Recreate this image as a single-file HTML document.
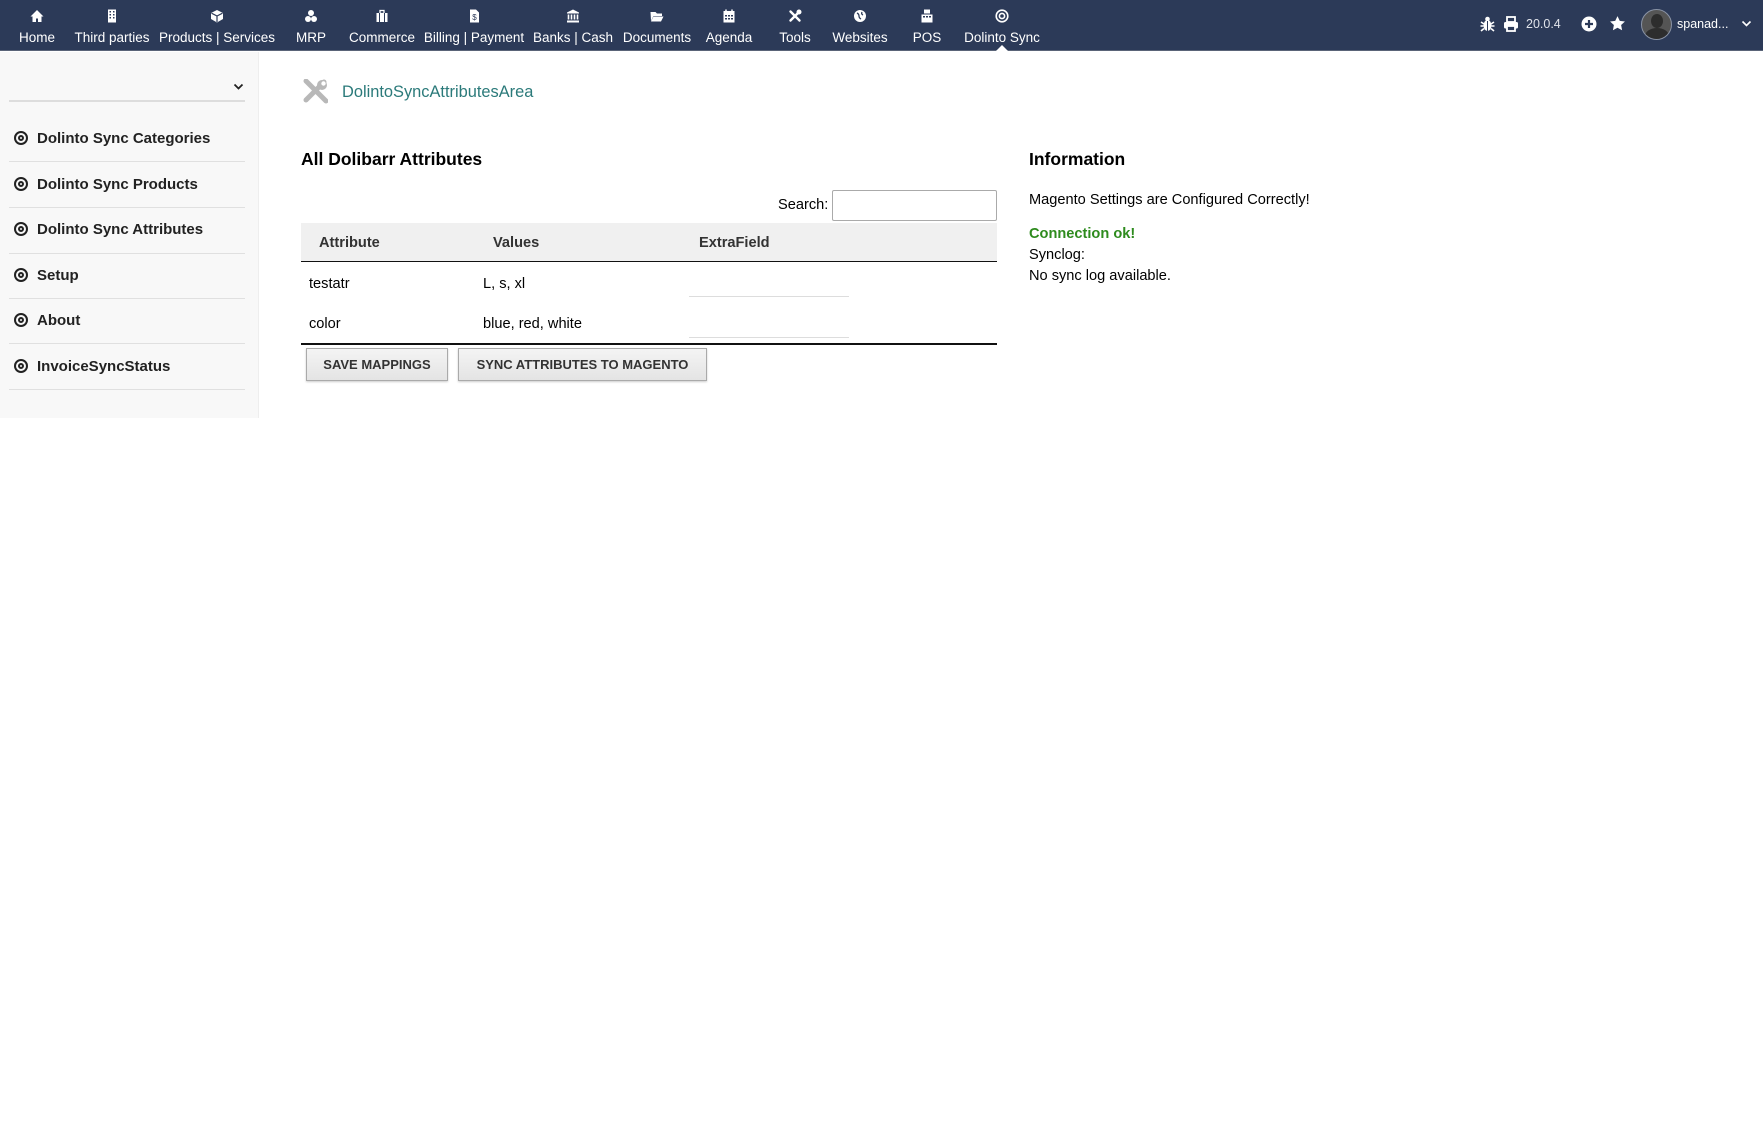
<!DOCTYPE html>
<html><head><meta charset="utf-8">
<style>
*{margin:0;padding:0;box-sizing:border-box}
body{width:1763px;height:1124px;background:#fff;font-family:"Liberation Sans",Arial,sans-serif;color:#000;position:relative;overflow:hidden}
#nav{position:absolute;left:0;top:0;width:1763px;height:51px;background:#2c3a58;border-bottom:1px solid #5a6478}
.ni{position:absolute;top:0;height:50px;text-align:center;color:#fff;font-size:13.5px;transform:translateX(-50%);white-space:nowrap}
.ni .ic{position:absolute;left:50%;top:9px;transform:translateX(-50%);width:14px;height:14px}
.ni .lb{position:absolute;top:30px;left:50%;transform:translateX(-50%)}
.ab{position:absolute}
#side{position:absolute;left:0;top:52px;width:259px;height:366px;background:#f8f8f8;border-right:1px solid #eee}
.mi{position:absolute;left:14px;font-size:15px;font-weight:bold;color:#222}
.sep{position:absolute;left:9px;width:236px;height:1px;background:#e0e0e0}
.tgt{display:inline-block;width:14px;height:14px;border:2px solid #222;border-radius:50%;position:relative;vertical-align:-2px;margin-right:9px}
.tgt:after{content:"";position:absolute;left:2px;top:2px;width:6px;height:6px;border:2px solid #222;border-radius:50%;box-sizing:border-box}
.t{position:absolute;font-size:14.6px;line-height:18px}
.btn{position:absolute;top:348px;height:33px;border:1px solid #aaa;background:linear-gradient(#f4f4f4,#e4e4e4);font-size:13px;font-weight:bold;color:#333;text-align:center;line-height:31px;box-shadow:0 1px 2px rgba(0,0,0,.2)}
</style></head><body>
<div id="nav">
<div class="ni" style="left:37px"><svg class="ic" viewBox="0 0 14 14"><path d="M7 1L0.5 7.5h2V13h3.5V9.5h2V13H11.5V7.5h2z" fill="#fff"/></svg><span class="lb">Home</span></div>
<div class="ni" style="left:112px"><svg class="ic" viewBox="0 0 14 14"><rect x="3" y="0.5" width="8" height="13" fill="#fff"/><g fill="#2c3a58"><rect x="4.5" y="2" width="1.5" height="1.5"/><rect x="8" y="2" width="1.5" height="1.5"/><rect x="4.5" y="5" width="1.5" height="1.5"/><rect x="8" y="5" width="1.5" height="1.5"/><rect x="4.5" y="8" width="1.5" height="1.5"/><rect x="8" y="8" width="1.5" height="1.5"/></g></svg><span class="lb">Third parties</span></div>
<div class="ni" style="left:217px"><svg class="ic" viewBox="0 0 14 14"><path d="M7 1L13 4v6l-6 3.5L1 10V4z" fill="#fff"/><path d="M1.5 4.2L7 7l5.5-2.8M7 7v6" stroke="#2c3a58" stroke-width="1.2" fill="none"/></svg><span class="lb">Products | Services</span></div>
<div class="ni" style="left:311px"><svg class="ic" viewBox="0 0 14 14"><circle cx="7" cy="4" r="3" fill="#fff"/><circle cx="4" cy="10" r="3" fill="#fff"/><circle cx="10" cy="10" r="3" fill="#fff"/></svg><span class="lb">MRP</span></div>
<div class="ni" style="left:382px"><svg class="ic" viewBox="0 0 14 14"><rect x="1.5" y="4" width="11" height="9" fill="#fff"/><rect x="5" y="1.5" width="4" height="3" fill="none" stroke="#fff" stroke-width="1.3"/><path d="M4.5 4v9M9.5 4v9" stroke="#2c3a58"/></svg><span class="lb">Commerce</span></div>
<div class="ni" style="left:474px"><svg class="ic" viewBox="0 0 14 14"><path d="M3 0.5h6l3 3V13.5H3z" fill="#fff"/><text x="7.5" y="11" font-size="8" fill="#2c3a58" text-anchor="middle" font-family="Liberation Sans">$</text></svg><span class="lb">Billing | Payment</span></div>
<div class="ni" style="left:573px"><svg class="ic" viewBox="0 0 14 14"><path d="M7 0.5L13 3.5v1H1v-1z" fill="#fff"/><path d="M2.5 5.5v5M5.5 5.5v5M8.5 5.5v5M11.5 5.5v5" stroke="#fff" stroke-width="1.6"/><rect x="1" y="11.5" width="12" height="2" fill="#fff"/></svg><span class="lb">Banks | Cash</span></div>
<div class="ni" style="left:657px"><svg class="ic" viewBox="0 0 14 14"><path d="M0.5 3h5l1.5 1.5h5V7H3.5L1 12z" fill="#fff"/><path d="M3.5 7.5H13.5L11 12.5H1z" fill="#fff"/></svg><span class="lb">Documents</span></div>
<div class="ni" style="left:729px"><svg class="ic" viewBox="0 0 14 14"><rect x="1.5" y="2" width="11" height="11.5" fill="#fff"/><path d="M4 0.5v3M10 0.5v3" stroke="#fff" stroke-width="1.5"/><g fill="#2c3a58"><rect x="3" y="6" width="2" height="1.5"/><rect x="6" y="6" width="2" height="1.5"/><rect x="9" y="6" width="2" height="1.5"/><rect x="3" y="9" width="2" height="1.5"/><rect x="6" y="9" width="2" height="1.5"/><rect x="9" y="9" width="2" height="1.5"/></g></svg><span class="lb">Agenda</span></div>
<div class="ni" style="left:795px"><svg class="ic" viewBox="0 0 14 14"><path d="M2.5 2.5l9 9M11.5 2.5l-9 9" stroke="#fff" stroke-width="2.4" stroke-linecap="round"/><circle cx="11" cy="3" r="2.5" fill="#fff"/></svg><span class="lb">Tools</span></div>
<div class="ni" style="left:860px"><svg class="ic" viewBox="0 0 14 14"><circle cx="7" cy="7" r="6" fill="#fff"/><path d="M4 4q2 1 2 3t2 3M9 3q-1 2 1 3" stroke="#2c3a58" stroke-width="1.3" fill="none"/></svg><span class="lb">Websites</span></div>
<div class="ni" style="left:927px"><svg class="ic" viewBox="0 0 14 14"><rect x="4" y="0.5" width="6" height="4" fill="#fff"/><rect x="1.5" y="5.5" width="11" height="8" fill="#fff"/><g fill="#2c3a58"><rect x="3" y="7" width="2" height="1.5"/><rect x="6" y="7" width="2" height="1.5"/><rect x="9" y="7" width="2" height="1.5"/></g></svg><span class="lb">POS</span></div>
<div class="ni" style="left:1002px"><svg class="ic" viewBox="0 0 14 14"><circle cx="7" cy="7" r="5.8" fill="none" stroke="#fff" stroke-width="1.6"/><circle cx="7" cy="7" r="2.6" fill="none" stroke="#fff" stroke-width="1.6"/></svg><span class="lb">Dolinto Sync</span></div>
<div class="ab" style="left:996px;top:45px;width:0;height:0;border-left:6px solid transparent;border-right:6px solid transparent;border-bottom:6px solid #fff"></div>

<svg class="ab" style="left:1480px;top:16px" width="15" height="16" viewBox="0 0 15 16"><ellipse cx="7.5" cy="9.5" rx="4" ry="5.5" fill="#fff"/><circle cx="7.5" cy="3" r="2.3" fill="#fff"/><path d="M1 6l3 2M14 6l-3 2M0.5 10h3M14.5 10h-3M1 15l3-2.5M14 15l-3-2.5" stroke="#fff" stroke-width="1.6"/><path d="M7.5 5v10" stroke="#2c3a58" stroke-width="1"/></svg>
<svg class="ab" style="left:1503px;top:16px" width="16" height="16" viewBox="0 0 16 16"><rect x="4" y="1" width="8" height="5" fill="none" stroke="#fff" stroke-width="1.8"/><rect x="1" y="6" width="14" height="6.5" rx="1.5" fill="#fff"/><rect x="4" y="10" width="8" height="5" fill="#2c3a58" stroke="#fff" stroke-width="1.8"/></svg>
<div class="ab" style="left:1526px;top:17px;color:#e0e3ea;font-size:12.5px">20.0.4</div>
<svg class="ab" style="left:1581px;top:16px" width="16" height="16" viewBox="0 0 16 16"><circle cx="8" cy="8" r="7.5" fill="#fff"/><path d="M8 4v8M4 8h8" stroke="#2c3a58" stroke-width="2.2"/></svg>
<svg class="ab" style="left:1609px;top:15px" width="17" height="17" viewBox="0 0 24 24"><path d="M12 1.5l3.2 6.8 7.3.9-5.4 5 1.4 7.3L12 18l-6.5 3.5 1.4-7.3-5.4-5 7.3-.9z" fill="#fff"/></svg>
<div class="ab" style="left:1641px;top:9px;width:31px;height:31px;border-radius:50%;background:#555;border:1px solid #8a93a5;overflow:hidden"><div style="position:absolute;left:9px;top:4px;width:12px;height:14px;border-radius:50%;background:#2d2d2d"></div><div style="position:absolute;left:3px;top:18px;width:24px;height:16px;border-radius:50% 50% 0 0;background:#2d2d2d"></div></div>
<div class="ab" style="left:1677px;top:17px;color:#fff;font-size:12.5px">spanad...</div>
<svg class="ab" style="left:1741px;top:20px" width="11" height="8" viewBox="0 0 11 8"><path d="M1.5 1.5l4 4 4-4" stroke="#fff" stroke-width="1.6" fill="none"/></svg>
</div>

<div id="side">
<svg class="ab" style="left:233px;top:31px" width="11" height="8" viewBox="0 0 11 8"><path d="M1.5 1.5l4 4 4-4" stroke="#222" stroke-width="1.8" fill="none"/></svg>
<div class="ab" style="left:9px;top:48px;width:236px;height:2px;background:#ddd"></div>
</div>
<div class="mi" style="top:130px"><span class="tgt"></span>Dolinto Sync Categories</div>
<div class="sep" style="top:161px"></div>
<div class="mi" style="top:176px"><span class="tgt"></span>Dolinto Sync Products</div>
<div class="sep" style="top:207px"></div>
<div class="mi" style="top:221px"><span class="tgt"></span>Dolinto Sync Attributes</div>
<div class="sep" style="top:253px"></div>
<div class="mi" style="top:267px"><span class="tgt"></span>Setup</div>
<div class="sep" style="top:298px"></div>
<div class="mi" style="top:312px"><span class="tgt"></span>About</div>
<div class="sep" style="top:343px"></div>
<div class="mi" style="top:358px"><span class="tgt"></span>InvoiceSyncStatus</div>
<div class="sep" style="top:389px"></div>

<svg class="ab" style="left:302px;top:79px" width="26" height="26" viewBox="0 0 26 26"><path d="M4 2l20 20" stroke="#b8b8b8" stroke-width="5" stroke-linecap="round"/><path d="M22 3l-18 18" stroke="#b8b8b8" stroke-width="5" stroke-linecap="round"/><circle cx="20" cy="6" r="5" fill="#b8b8b8"/><circle cx="21.5" cy="4.5" r="2.2" fill="#fff"/></svg>
<div class="t" style="left:342px;top:83px;font-size:16.4px;color:#2b7a7a">DolintoSyncAttributesArea</div>

<div class="t" style="left:301px;top:149px;font-size:17.5px;font-weight:bold;line-height:21px">All Dolibarr Attributes</div>
<div class="t" style="left:778px;top:196px">Search:</div>
<div class="ab" style="left:832px;top:190px;width:165px;height:31px;border:1px solid #aaa;border-radius:2px"></div>
<div class="ab" style="left:301px;top:223px;width:696px;height:39px;background:#f0f0f0;border-bottom:1.5px solid #111"></div>
<div class="t" style="left:319px;top:234px;font-weight:bold;color:#333">Attribute</div>
<div class="t" style="left:493px;top:234px;font-weight:bold;color:#333">Values</div>
<div class="t" style="left:699px;top:234px;font-weight:bold;color:#333">ExtraField</div>
<div class="t" style="left:309px;top:275px">testatr</div>
<div class="t" style="left:483px;top:275px">L, s, xl</div>
<div class="ab" style="left:689px;top:296px;width:160px;height:1px;background:#ddd"></div>
<div class="t" style="left:309px;top:315px">color</div>
<div class="t" style="left:483px;top:315px">blue, red, white</div>
<div class="ab" style="left:689px;top:337px;width:160px;height:1px;background:#ddd"></div>
<div class="ab" style="left:301px;top:343px;width:696px;height:1.5px;background:#111"></div>
<div class="btn" style="left:306px;width:142px">SAVE MAPPINGS</div>
<div class="btn" style="left:458px;width:249px">SYNC ATTRIBUTES TO MAGENTO</div>

<div class="t" style="left:1029px;top:149px;font-size:17.5px;font-weight:bold;line-height:21px">Information</div>
<div class="t" style="left:1029px;top:191px">Magento Settings are Configured Correctly!</div>
<div class="t" style="left:1029px;top:225px;font-weight:bold;color:#2e8b1e">Connection ok!</div>
<div class="t" style="left:1029px;top:246px">Synclog:</div>
<div class="t" style="left:1029px;top:267px">No sync log available.</div>
</body></html>
